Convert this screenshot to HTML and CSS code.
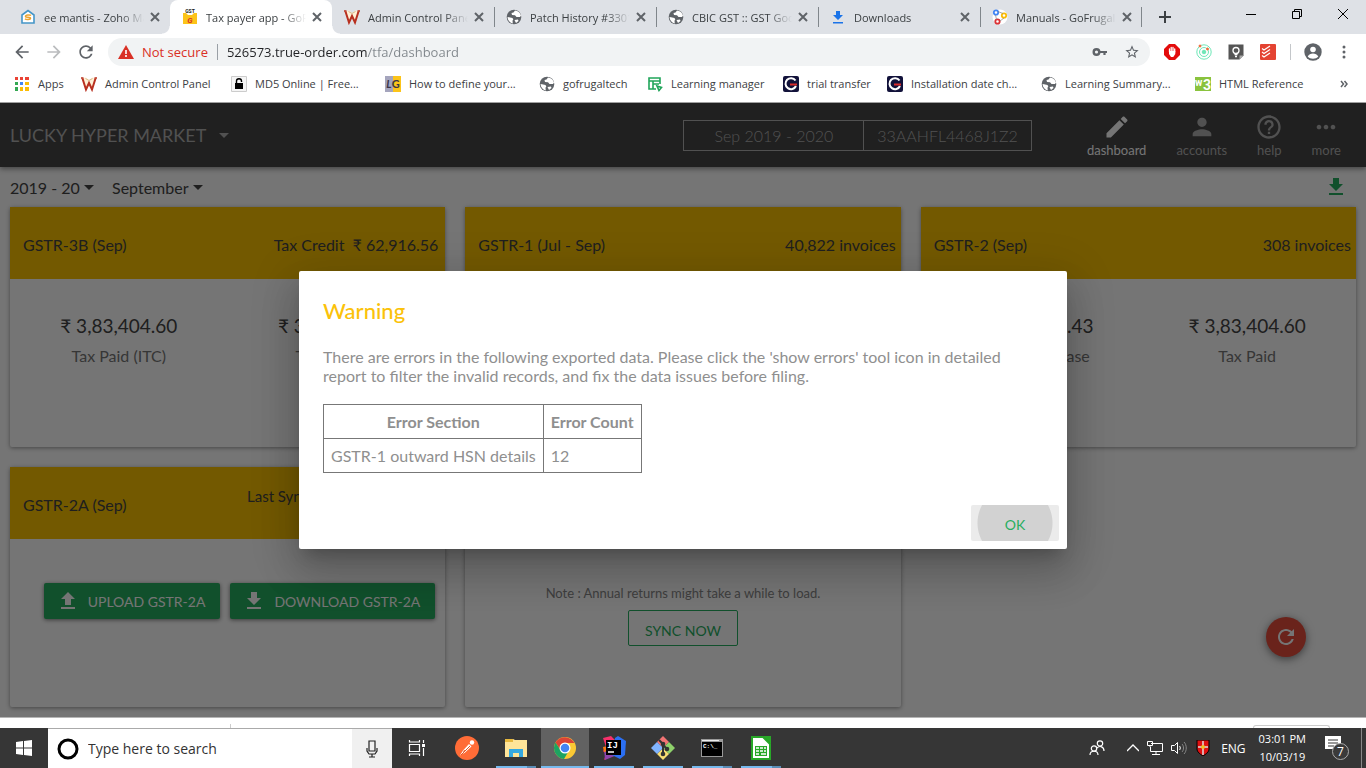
FILE: index.html
```html
<!DOCTYPE html>
<html lang="en">
<head>
    <meta charset="UTF-8">
    <meta name="viewport" content="width=device-width, initial-scale=1.0">
    <title>Tax payer app - GoFrugal</title>
    <link rel="stylesheet" href="styles.css">
</head>
<body>
    <!-- shared icons -->
    <svg class="sprite" aria-hidden="true">
        <symbol id="close" viewBox="0 0 10 10"><path d="M1 1l8 8M9 1L1 9" stroke="#5f6368" stroke-width="2"/></symbol>
        <symbol id="globe" viewBox="0 0 16 16"><circle cx="8" cy="8" r="7.3" fill="#5f6368"/><path d="M9 1.500l-1.500 2-2 .5.5 2 3 .3 1.500 1.700h3.500l1-1.500C14 3.500 12 1.800 9 1.500zM1.500 8l1.500.2 3.500.8.8 1.500-.8 1.200.3 2.800C4 13.800 1.800 11.500 1.500 8zM8.500 11l3.500-.5.5 1.500-2.500 2z" fill="#fff"/></symbol>
        <symbol id="book" viewBox="0 0 16 16"><path d="M1.500 2L5 13l3-6 3 6 3.500-11-3-.5L8 4 5 1.500z" fill="#fff0d6"/><path d="M0 2h2.500M13.500 2H16" stroke="#b8301f" stroke-width="1.500"/><path d="M1.500 2.500L5 13.500 8 7l3 6.500 3.500-11" fill="none" stroke="#b8301f" stroke-width="2"/><path d="M4.500 2.500L8 4.500l3.500-2" fill="none" stroke="#d9b98c"/></symbol>
        <symbol id="gee" viewBox="0 0 16 16"><rect width="16" height="16" rx="2" fill="#12123a"/><path d="M12.500 4.500A5.500 5.500 0 1 0 13 10" fill="none" stroke="#fff" stroke-width="2"/><path d="M7 8.500h7" stroke="#d92b2b" stroke-width="2"/></symbol>
        <symbol id="download" viewBox="0 0 24 24"><path d="M19 9h-4V3H9v6H5l7 7 7-7zM5 18v2h14v-2H5z"/></symbol>
        <symbol id="upload" viewBox="0 0 24 24"><path d="M9 16h6v-6h4l-7-7-7 7h4zm-4 2h14v2H5z"/></symbol>
        <symbol id="refresh" viewBox="0 0 24 24"><path d="M17.650 6.350C16.200 4.900 14.210 4 12 4c-4.420 0-7.990 3.580-7.990 8s3.570 8 7.990 8c3.730 0 6.840-2.550 7.730-6h-2.080c-.82 2.330-3.040 4-5.650 4-3.310 0-6-2.690-6-6s2.690-6 6-6c1.660 0 3.140.69 4.220 1.780L13 11h7V4l-2.350 2.350z"/></symbol>
        <symbol id="back" viewBox="0 0 24 24"><path d="M20 11H7.830l5.590-5.590L12 4l-8 8 8 8 1.410-1.410L7.830 13H20v-2z"/></symbol>
    </svg>

    <header class="browser">
        <div class="tabs">
            <div class="tab"><svg class="fav" viewBox="0 0 16 16"><path d="M2 6l6-4.500L14 6v8H2z" fill="#fff" stroke="#4596c8" stroke-width="1.600"/><path d="M11 6.500c-1-1-6-.5-5.500 1.200.3 1 5 .3 5 1.600 0 1.600-4.500 1.700-5.500.5" fill="none" stroke="#eda32c" stroke-width="1.500"/></svg><span class="tab-title">ee mantis - Zoho Mail</span><button aria-label="Close tab"><svg><use href="#close"/></svg></button></div>
            <div class="tab active"><svg class="fav" viewBox="0 0 16 16"><path d="M1 4h3l2 2h4l2-2h3v11H1z" fill="#fcc419"/><text x="8" y="4" text-anchor="middle" font-size="5" font-weight="bold" font-family="Roboto, sans-serif" fill="#222">GST</text><text x="8" y="14" text-anchor="middle" font-size="8" font-weight="bold" font-style="italic" font-family="Roboto, sans-serif" fill="#d93025">G</text></svg><span class="tab-title">Tax payer app - GoFrugal</span><button aria-label="Close tab"><svg><use href="#close"/></svg></button></div>
            <div class="tab"><svg class="fav"><use href="#book"/></svg><span class="tab-title">Admin Control Panel</span><button aria-label="Close tab"><svg><use href="#close"/></svg></button></div>
            <div class="tab line"><svg class="fav"><use href="#globe"/></svg><span class="tab-title">Patch History #3301</span><button aria-label="Close tab"><svg><use href="#close"/></svg></button></div>
            <div class="tab line"><svg class="fav"><use href="#globe"/></svg><span class="tab-title">CBIC GST :: GST Goods</span><button aria-label="Close tab"><svg><use href="#close"/></svg></button></div>
            <div class="tab line"><svg class="fav" viewBox="0 0 16 16" fill="#1a73e8"><path d="M6 2h4v4h3l-5 5-5-5h3zM3 13h10v1.500H3z"/></svg><span class="tab-title">Downloads</span><button aria-label="Close tab"><svg><use href="#close"/></svg></button></div>
            <div class="tab line last"><svg class="fav" viewBox="0 0 16 16"><circle cx="8" cy="8" r="7.500" fill="#fff"/><g fill="none" stroke-width="1.800"><circle cx="4" cy="3.500" r="2.200" stroke="#4285f4"/><circle cx="12" cy="6.500" r="2.200" stroke="#fbbc05"/><circle cx="5.500" cy="12.500" r="2.200" stroke="#db3236"/><path d="M6 2.500l5 2M3.500 6l1 4.500M8 12l4-3" stroke="#888" stroke-width=".7"/></g></svg><span class="tab-title">Manuals - GoFrugal</span><button aria-label="Close tab"><svg><use href="#close"/></svg></button></div>
            <button class="new-tab" aria-label="New tab"><svg viewBox="0 0 12 12"><path d="M6 0v12M0 6h12" stroke="#3c4043" stroke-width="2"/></svg></button>
            <div class="window-buttons">
                <button aria-label="Minimize"><svg viewBox="0 0 10 10"><path d="M0 5.500h10" stroke="#000"/></svg></button>
                <button aria-label="Restore"><svg viewBox="0 0 10 10" fill="none" stroke="#000"><path d="M.5 2.500h7v7h-7zM2.500 2.500v-2h7v7h-2"/></svg></button>
                <button aria-label="Close"><svg viewBox="0 0 10 10"><path d="M0 0l10 10M10 0L0 10" stroke="#000"/></svg></button>
            </div>
        </div>
        <div class="toolbar">
            <button class="tool" aria-label="Back"><svg fill="#5f6368"><use href="#back"/></svg></button>
            <button class="tool flip" aria-label="Forward"><svg fill="#babcbe"><use href="#back"/></svg></button>
            <button class="tool" aria-label="Reload"><svg fill="#5f6368"><use href="#refresh"/></svg></button>
            <div class="omnibox">
                <svg class="warn" viewBox="0 0 16 14"><path d="M8 0l8 14H0z" fill="#d93025"/><path d="M8 5v4M8 10v2" stroke="#fff" stroke-width="1.600"/></svg>
                <span class="not-secure">Not secure</span>
                <input class="url" type="text" aria-label="Address" value="526573.true-order.com/tfa/dashboard">
                <button aria-label="Saved passwords"><svg viewBox="0 0 16 16" fill="none" stroke="#5f6368"><circle cx="4.500" cy="8" r="2.800" stroke-width="2.400"/><path d="M7 8h8M12.500 8v3" stroke-width="2.200"/></svg></button>
                <button aria-label="Bookmark this page"><svg viewBox="0 0 24 24" fill="#5f6368"><path d="M22 9.240l-7.190-.62L12 2 9.190 8.630 2 9.240l5.460 4.730L5.820 21 12 17.270 18.180 21l-1.630-7.030L22 9.240zM12 15.400l-3.760 2.270 1-4.280-3.320-2.880 4.380-.38L12 6.100l1.710 4.040 4.380.38-3.320 2.880 1 4.280L12 15.400z"/></svg></button>
            </div>
            <div class="extensions">
                <button aria-label="Ad blocker"><svg viewBox="0 0 16 16"><path d="M5 0h6l5 5v6l-5 5H5l-5-5V5z" fill="#e30b0b"/><path d="M5.500 8V5M7.200 7V3.500M9 7V3.500M10.700 8V5" stroke="#fff" stroke-width="1.300" stroke-linecap="round"/><path d="M5 7h6.300v3l-2 3H7l-2-3z" fill="#fff"/></svg></button>
                <button aria-label="Orbit"><svg viewBox="0 0 16 16" fill="none" stroke="#6ee7b7"><circle cx="8" cy="8" r="7.200"/><circle cx="8" cy="8" r="4.500"/><circle cx="8" cy="8" r="1.800" fill="#6ee7b7"/><circle cx="4" cy="2" r="1" fill="#f26b3a" stroke="#f26b3a"/><circle cx="11.500" cy="5" r="1" fill="#f26b3a" stroke="#f26b3a"/></svg></button>
                <button aria-label="Keep"><svg viewBox="0 0 16 16"><path d="M.5.5h15v11l-4 4H.5z" fill="#555"/><path d="M11.500 15.500v-4h4z" fill="#aaa"/><circle cx="8" cy="6.500" r="3" fill="none" stroke="#fff" stroke-width="1.300"/><path d="M6.500 10.500h3M7 12.500h2" stroke="#fff" stroke-width="1.300"/></svg></button>
                <button aria-label="Todoist"><svg viewBox="0 0 16 16"><rect width="16" height="16" rx="1" fill="#e44332"/><path d="M2 4.500l2 1.500 6-4M2 8l2 1.500 6-4M2 11.500L4 13l6-4" fill="none" stroke="#fff" stroke-width="1.200"/></svg></button>
            </div>
            <button class="profile" aria-label="Profile"><svg viewBox="0 0 18 18"><circle cx="9" cy="9" r="8.700" fill="#5f6368"/><circle cx="9" cy="6.500" r="2.800" fill="#fff"/><path d="M3.700 13.500c2-4 8.600-4 10.600 0-2.500 3-8.100 3-10.600 0z" fill="#fff"/></svg></button>
            <button class="menu" aria-label="Menu"><svg viewBox="0 0 4 16" fill="#5f6368"><circle cx="2" cy="3" r="1.500"/><circle cx="2" cy="8" r="1.500"/><circle cx="2" cy="13" r="1.500"/></svg></button>
        </div>
        <nav class="bookmarks">
            <a href="#"><svg viewBox="0 0 16 16"><path d="M1 1h4v4H1zM6 1h4v4H6zM11 1h4v4h-4z" fill="#ea4335"/><path d="M1 6h4v4H1z" fill="#34a853"/><path d="M6 6h4v4H6z" fill="#4285f4"/><path d="M11 6h4v4h-4zM11 11h4v4h-4zM6 11h4v4H6z" fill="#fbbc05"/><path d="M1 11h4v4H1z" fill="#34a853"/><path d="M4.500 0v16M9.500 0v16M0 4.500h16M0 9.500h16" stroke="#fff"/></svg>Apps</a>
            <a href="#"><svg><use href="#book"/></svg>Admin Control Panel</a>
            <a href="#"><svg viewBox="0 0 16 16"><path d="M.5.5h15v15H.5z" fill="#f5f5f5" stroke="#ccc"/><path d="M4 7h8v6H4z"/><path d="M5.500 7V5c0-3 5-3 5 0v1" fill="none" stroke="#000" stroke-width="1.400"/></svg>MD5 Online | Free...</a>
            <a href="#"><svg viewBox="0 0 16 16"><path d="M0 0h8v16H0z" fill="#a5a5bd"/><path d="M8 0h8v16H8z" fill="#fcc419"/><text x="8" y="12" text-anchor="middle" font-size="11" font-weight="bold" font-family="Lato, sans-serif" fill="#3c3548"><tspan font-style="italic">L</tspan>G</text></svg>How to define your...</a>
            <a href="#"><svg><use href="#globe"/></svg>gofrugaltech</a>
            <a href="#"><svg viewBox="0 0 16 16" fill="none" stroke="#20a55a" stroke-width="1.600"><path d="M9 13H2V2h11v6M2 5h11M6 5v8M6 8h6"/><path d="M10 10l4.500 1.500-2.500 3z"/></svg>Learning manager</a>
            <a href="#"><svg><use href="#gee"/></svg>trial transfer</a>
            <a href="#"><svg><use href="#gee"/></svg>Installation date ch...</a>
            <a href="#"><svg><use href="#globe"/></svg>Learning Summary...</a>
            <a href="#"><svg viewBox="0 0 16 16"><rect y="1" width="16" height="14" fill="#8ac33e"/><text x="0" y="10" font-size="10" font-weight="bold" font-family="Roboto, sans-serif" fill="#fff">w</text><text x="8" y="14" font-size="14" font-weight="bold" font-family="Roboto, sans-serif" fill="#fff">3</text></svg>HTML Reference</a>
            <button class="more-bookmarks" aria-label="More bookmarks"><svg viewBox="0 0 8 8" fill="none" stroke="#5f6368" stroke-width="1.500"><path d="M1 1l2.500 3L1 7M4.500 1L7 4 4.500 7"/></svg></button>
        </nav>
    </header>

    <main class="app">
        <header class="app-header">
            <div class="select company">
                <select aria-label="Company"><option>LUCKY HYPER MARKET</option></select>
            </div>
            <div class="period"><span>Sep 2019 - 2020</span><span>33AAHFL4468J1Z2</span></div>
            <nav class="app-nav">
                <a class="current" href="#"><svg viewBox="0 0 24 24"><path d="M3 17.250V21h3.750L17.810 9.940l-3.750-3.750L3 17.250zM20.710 7.040c.39-.39.39-1.020 0-1.410l-2.340-2.340c-.39-.39-1.020-.39-1.410 0l-1.830 1.830 3.750 3.750 1.830-1.830z"/></svg>dashboard</a>
                <a href="#"><svg viewBox="0 0 24 24"><path d="M12 12c2.210 0 4-1.790 4-4s-1.790-4-4-4-4 1.790-4 4 1.790 4 4 4zm0 2c-2.670 0-8 1.340-8 4v2h16v-2c0-2.660-5.330-4-8-4z"/></svg>accounts</a>
                <a href="#"><svg viewBox="0 0 24 24"><path d="M11 18h2v-2h-2v2zm1-16C6.480 2 2 6.480 2 12s4.480 10 10 10 10-4.480 10-10S17.520 2 12 2zm0 18c-4.410 0-8-3.590-8-8s3.590-8 8-8 8 3.590 8 8-3.590 8-8 8zm0-14c-2.210 0-4 1.790-4 4h2c0-1.100.9-2 2-2s2 .9 2 2c0 2-3 1.750-3 5h2c0-2.250 3-2.500 3-5 0-2.210-1.790-4-4-4z"/></svg>help</a>
                <a href="#"><svg viewBox="0 0 24 24"><path d="M6 10c-1.100 0-2 .9-2 2s.9 2 2 2 2-.9 2-2-.9-2-2-2zm12 0c-1.100 0-2 .9-2 2s.9 2 2 2 2-.9 2-2-.9-2-2-2zm-6 0c-1.100 0-2 .9-2 2s.9 2 2 2 2-.9 2-2-.9-2-2-2z"/></svg>more</a>
            </nav>
        </header>

        <div class="filters">
            <div class="select"><select aria-label="Year"><option>2019 - 20</option></select></div>
            <div class="select"><select aria-label="Month"><option>September</option></select></div>
            <button class="export" aria-label="Download"><svg><use href="#download"/></svg></button>
        </div>

        <div class="cards">
            <section class="card">
                <div class="card-header credit"><h2>GSTR-3B (Sep)</h2><span>Tax Credit &nbsp;₹ 62,916.56</span></div>
                <div class="amounts">
                    <div><b>₹ 3,83,404.60</b><span>Tax Paid (ITC)</span></div>
                    <div><b>₹ 3,20,488.04</b><span>Tax Payable</span></div>
                </div>
            </section>
            <section class="card">
                <div class="card-header"><h2>GSTR-1 (Jul - Sep)</h2><span>40,822 invoices</span></div>
            </section>
            <section class="card">
                <div class="card-header"><h2>GSTR-2 (Sep)</h2><span>308 invoices</span></div>
                <div class="amounts">
                    <div><b>₹ 50,97,563.43</b><span>Taxable Purchase</span></div>
                    <div><b>₹ 3,83,404.60</b><span>Tax Paid</span></div>
                </div>
            </section>
            <section class="card">
                <div class="card-header sync"><h2>GSTR-2A (Sep)</h2><span>Last Sync : 03 Oct 2019 2:48</span></div>
                <div class="actions">
                    <button><svg><use href="#upload"/></svg>UPLOAD GSTR-2A</button>
                    <button><svg><use href="#download"/></svg>DOWNLOAD GSTR-2A</button>
                </div>
            </section>
            <section class="card">
                <div class="card-header"><h2>GSTR-9</h2></div>
                <div class="annual">
                    <p>Note : Annual returns might take a while to load.</p>
                    <button>SYNC NOW</button>
                </div>
            </section>
        </div>

        <button class="fab" aria-label="Refresh"><svg><use href="#refresh"/></svg></button>

        <div class="overlay">
            <div class="dialog" role="dialog" aria-labelledby="dialog-title">
                <h2 id="dialog-title">Warning</h2>
                <p>There are errors in the following exported data. Please click the 'show errors' tool icon in detailed report to filter the invalid records, and fix the data issues before filing.</p>
                <table>
                    <tr><th>Error Section</th><th>Error Count</th></tr>
                    <tr><td>GSTR-1 outward HSN details</td><td>12</td></tr>
                </table>
                <button class="ok">OK</button>
            </div>
        </div>
    </main>

    <div class="shelf"><span class="shelf-item"></span><span class="shelf-all"></span></div>

    <footer class="taskbar">
        <button class="start" aria-label="Start"><svg viewBox="0 0 16 16" fill="#fff"><path d="M0 2l7-1v6.500H0zM8 .9L16 0v7.500H8zM0 8.500h7V15l-7-1zM8 8.500h8V16l-8-1z"/></svg></button>
        <label class="search">
            <svg viewBox="0 0 22 22"><circle cx="11" cy="11" r="9" fill="none" stroke="#000" stroke-width="3"/></svg>
            <input type="text" placeholder="Type here to search">
        </label>
        <button class="mic" aria-label="Voice search"><svg viewBox="0 0 16 18" fill="none" stroke="#222" stroke-width="1.200"><path d="M5 1h6v10H5zM3 8v3l2 3h6l2-3V8M8 14v3M5 17h6"/></svg></button>
        <div class="task-apps">
            <button class="view" aria-label="Task view"><svg viewBox="0 0 18 18" fill="none" stroke="#fff" stroke-width="1.200"><path d="M1.500 5.500h10v7h-10zM1.500 1v2h10V1M1.500 17v-2h10v2M15.500 1v3M15.500 9v8"/><path d="M14 5h3v3h-3z" fill="#fff" stroke="none"/></svg></button>
            <button aria-label="Postman"><svg viewBox="0 0 24 24"><circle cx="12" cy="12" r="12" fill="#ff6c37"/><path d="M5 19.500l3-5L14 8l2.500 2.500-6.500 6z" fill="#fff"/><path d="M6 19l9-9M8.500 16.500l1-2.500" stroke="#e25a2a"/><circle cx="17" cy="6.500" r="2.200" fill="#fff"/></svg></button>
            <button class="open" aria-label="File Explorer"><svg viewBox="0 0 24 24"><path d="M1 3h8l2 1h12v17H1z" fill="#ffe599"/><path d="M1 3h8v3H1z" fill="#e8b93e"/><path d="M5 13h14v8h-4v-4H9v4H5z" fill="#35a9e0"/></svg></button>
            <button class="focused" aria-label="Chrome"><svg viewBox="0 0 24 24"><circle cx="12" cy="12" r="11" fill="#fbc934"/><path d="M2.500 6.500A11 11 0 0 1 21.500 7H12l-4.500 7z" fill="#db4437"/><path d="M2.500 6.500A11 11 0 0 0 11 23l5-8.500-8.500-.5z" fill="#1da362"/><circle cx="12" cy="12" r="5.500" fill="#fff"/><circle cx="12" cy="12" r="4.300" fill="#4285f4"/></svg></button>
            <button class="open one" aria-label="IntelliJ IDEA"><svg viewBox="0 0 24 24"><path d="M1 2l8-2 6 6-5 14-8 4 2-6-3-3 3-4z" fill="#f8306b"/><path d="M2 12l8-2 5 9-12 5z" fill="#8e44ad"/><path d="M1 11l5-1v5l-4 1z" fill="#f97a12"/><path d="M13 2l3-2 8 5-1 14-5 4-8-4z" fill="#2b6ff2"/><path d="M4 4h15v15H4z" fill="#000"/><path d="M6 16h6" stroke="#fff" stroke-width="1.500"/><text x="5" y="12" font-size="9" font-weight="bold" font-family="Liberation Mono, monospace" fill="#fff">IJ</text></svg></button>
            <button class="open one" aria-label="Git"><svg viewBox="0 0 24 24"><path d="M12 0l6 6-6 6-6-6z" fill="#f27474"/><path d="M18 6l6 6-6 6-6-6z" fill="#8ed16b"/><path d="M12 12l6 6-6 6-6-6z" fill="#f8dd72"/><path d="M6 6l6 6-6 6-6-6z" fill="#80b4ff"/><path d="M8 4l4 4v10M12 9l4 4" stroke="#333" stroke-width="2" fill="none"/><g fill="#333"><circle cx="12" cy="8" r="2.300"/><circle cx="12" cy="18" r="2.300"/><circle cx="16" cy="13" r="2.300"/></g></svg></button>
            <button class="open" aria-label="Command Prompt"><svg viewBox="0 0 24 24"><path d="M1 3h22v18H1z" fill="#999"/><path d="M2 6h20v14H2z"/><path d="M2 4h17v1H2z" fill="#eee"/><text x="3" y="12" font-size="6" font-weight="bold" font-family="Liberation Mono, monospace" fill="#fff">C:\_</text></svg></button>
            <button class="open" aria-label="LibreOffice Calc"><svg viewBox="0 0 24 24"><path d="M3 1h11l7 7v15H3z" fill="#fff" stroke="#28a828" stroke-width="2"/><path d="M14 0h8v8z" fill="#28a828"/><path d="M6 10h12v10H6z" fill="#28a828"/><path d="M7 12h3M11 12h3M15 12h2M7 15h3M11 15h3M15 15h2M7 18h3M12 18h5" stroke="#fff" stroke-width="1.500"/></svg></button>
        </div>
        <div class="tray">
            <svg class="people" viewBox="0 0 16 16" fill="none" stroke="#fff" stroke-width="1.200"><circle cx="11" cy="3.500" r="2.700"/><path d="M8 8c3-3 7-1 7 3"/><circle cx="5" cy="8.500" r="2.700"/><path d="M1 15c0-5 8-5 8 0"/></svg>
            <svg class="chevron" viewBox="0 0 12 12" fill="none" stroke="#fff" stroke-width="1.300"><path d="M0 9l6-6 6 6"/></svg>
            <svg viewBox="0 0 16 16" fill="none" stroke="#fff"><path d="M4 3.500h11.500v8H3.500V7M9 12v3M5 14.500h8M.5 1.500h5v4h-5zM3 5v2"/></svg>
            <svg viewBox="0 0 16 16" fill="none" stroke="#fff"><path d="M.5 5.500h3l3-3v11l-3-3h-3z"/><path d="M8.500 6c1 1 1 3 0 4"/><path d="M11 4c2 2 2 6 0 8M13 2c3 3 3 9 0 12" stroke="#888"/></svg>
            <svg viewBox="0 0 16 16"><path d="M2 0h12v9c0 3-3 5-6 7-3-2-6-4-6-7z" fill="#e01010" stroke="#000"/><path d="M8 1v14M3 7h10" stroke="#ddd" stroke-width="1.500"/><circle cx="8" cy="7" r="2" fill="#f0c020"/></svg>
            <span class="lang">ENG</span>
            <time>03:01 PM<br>10/03/19</time>
            <button class="notices" aria-label="7 notifications"><svg viewBox="0 0 24 24"><path d="M0 0h16v13h-5l-3 3v-3H0z" fill="#fff"/><path d="M3 4h10M3 7h10M3 10h6" stroke="#333"/><circle cx="15.500" cy="15.500" r="8" fill="#3a3a3a" stroke="#aaa"/><text x="15.500" y="20" text-anchor="middle" font-size="12" font-family="Open Sans, sans-serif" fill="#fff">7</text></svg></button>
        </div>
    </footer>
</body>
</html>
```
FILE: styles.css
```css
* {
    margin: 0;
    padding: 0;
    box-sizing: border-box;
}

body {
    display: flex;
    flex-direction: column;
    min-height: 100vh;
    font-family: Lato, sans-serif;
    background-color: #fff;
}

button {
    border: none;
    background: none;
    font-family: inherit;
    cursor: pointer;
}

a {
    color: inherit;
    text-decoration: none;
}

svg {
    display: block;
    flex: none;
}

.sprite {
    position: absolute;
    width: 0;
    height: 0;
}

/* browser */
.browser {
    font-family: "Open Sans", sans-serif;
    font-size: 11px;
    color: #3c4043;
    border-bottom: 1px solid #a0a0a0;
}

.tabs {
    display: flex;
    height: 34px;
    padding-left: 8px;
    background-color: #dee1e6;
}

.tab {
    position: relative;
    display: flex;
    align-items: center;
    width: 162px;
    padding: 0 10px 0 12px;
}

.tab.active {
    background-color: #fff;
    border-radius: 8px 8px 0 0;
}

/* curved feet of the active tab */
.tab.active::before,
.tab.active::after {
    content: "";
    position: absolute;
    bottom: 0;
    width: 8px;
    height: 8px;
}

.tab.active::before {
    left: -8px;
    background: radial-gradient(circle at 0 0, transparent 7px, #fff 8px);
}

.tab.active::after {
    right: -8px;
    background: radial-gradient(circle at 100% 0, transparent 7px, #fff 8px);
}

.tab.line::before,
.tab.last::after {
    content: "";
    position: absolute;
    left: 0;
    top: 7px;
    width: 1px;
    height: 20px;
    background-color: #80868b;
}

.tab.last::after {
    left: auto;
    right: 0;
}

.fav {
    width: 16px;
    height: 16px;
    margin-right: 8px;
}

.tab-title {
    flex: 1;
    overflow: hidden;
    white-space: nowrap;
    -webkit-mask-image: linear-gradient(to left, transparent, #000 24px);
    mask-image: linear-gradient(to left, transparent, #000 24px);
}

.tab button {
    margin-left: 6px;
}

.tab button svg {
    width: 10px;
    height: 10px;
}

.new-tab {
    padding: 0 17px;
}

.new-tab svg {
    width: 12px;
    height: 12px;
}

.window-buttons {
    display: flex;
    margin-left: auto;
}

.window-buttons button {
    width: 46px;
    padding: 0 18px 6px;
}

.window-buttons svg {
    width: 10px;
    height: 10px;
}

.toolbar {
    display: flex;
    align-items: center;
    height: 35px;
    padding: 0 20px 0 12px;
}

.tool {
    margin-right: 12px;
}

.tool svg {
    width: 20px;
    height: 20px;
}

.tool.flip {
    transform: scaleX(-1);
}

.omnibox {
    flex: 1;
    display: flex;
    align-items: center;
    height: 28px;
    padding: 0 10px;
    border-radius: 14px;
    background-color: #f1f3f4;
    font-size: 13px;
}

.warn {
    width: 16px;
    height: 14px;
    margin-right: 8px;
}

.not-secure {
    padding-right: 9px;
    border-right: 1px solid #9aa0a6;
    line-height: 16px;
    color: #d93025;
}

/* host in dark, path in grey */
.url {
    flex: 1;
    min-width: 0;
    padding-left: 9px;
    border: none;
    outline: none;
    font: inherit;
    color: transparent;
    background-image: linear-gradient(to right, #202124 149px, #80868b 149px);
    -webkit-background-clip: text;
    background-clip: text;
}

.omnibox button {
    margin-left: 16px;
}

.omnibox button svg {
    width: 16px;
    height: 16px;
}

.extensions {
    display: flex;
    gap: 16px;
    margin-left: 14px;
    padding-right: 14px;
    border-right: 1px solid #c4c7ca;
}

.extensions svg {
    width: 16px;
    height: 16px;
}

.profile {
    margin-left: 13px;
}

.profile svg {
    width: 18px;
    height: 18px;
}

.menu {
    margin-left: 20px;
}

.menu svg {
    width: 4px;
    height: 16px;
}

.bookmarks {
    display: grid;
    grid-template-columns: 67px 150px 154px 154px 108px 136px 104px 154px 154px 1fr auto;
    align-items: center;
    height: 33px;
    padding: 0 18px 4px 14px;
    overflow: hidden;
}

.bookmarks a {
    display: flex;
    align-items: center;
    gap: 8px;
    white-space: nowrap;
}

.bookmarks svg {
    width: 16px;
    height: 16px;
}

.bookmarks .more-bookmarks svg {
    width: 8px;
    height: 8px;
}

/* application */
.app {
    position: relative;
    flex: 1;
    background-color: #fefefe;
    color: #444;
    overflow: hidden;
}

.app-header {
    display: flex;
    align-items: center;
    height: 64px;
    padding: 0 25px 0 10px;
    background-color: #464646;
    box-shadow: 0 2px 5px rgba(0, 0, 0, .4);
    color: #b0b0b0;
}

.select {
    display: flex;
    align-items: center;
    gap: 4px;
}

.select::after {
    content: "";
    border: 5px solid transparent;
    border-top-color: currentColor;
    border-bottom: 0;
}

.select select {
    appearance: none;
    border: none;
    background: none;
    color: inherit;
    font-family: inherit;
    font-size: 16px;
}

.company {
    gap: 12px;
}

.company select {
    font-size: 18px;
}

.period {
    display: flex;
    margin-left: auto;
    border: 1px solid #b0b0b0;
    font-size: 16px;
    font-weight: 300;
    line-height: 29px;
    text-align: center;
}

.period span {
    padding: 0 13px;
}

.period span:first-child {
    padding: 0 30px;
    border-right: 1px solid #b0b0b0;
}

.app-nav {
    display: flex;
    gap: 30px;
    margin-left: 55px;
    font-size: 13px;
}

.app-nav a {
    display: flex;
    flex-direction: column;
    align-items: center;
    line-height: 16px;
}

.app-nav svg {
    width: 28px;
    height: 28px;
    margin: 0 -2px 1px;
    fill: currentColor;
}

.app-nav .current {
    color: #fff;
}

.filters {
    display: flex;
    align-items: center;
    gap: 18px;
    height: 40px;
    padding: 0 18px 0 10px;
}

.export {
    margin-left: auto;
}

.export svg {
    width: 24px;
    height: 24px;
    fill: #27ae60;
}

.cards {
    display: grid;
    grid-template-columns: repeat(3, 1fr);
    grid-auto-rows: 240px;
    gap: 20px;
    padding: 0 10px 10px;
}

.card {
    border-radius: 2px;
    background-color: #fff;
    box-shadow: 0 1px 4px rgba(0, 0, 0, .4);
}

.card-header {
    display: flex;
    align-items: center;
    justify-content: space-between;
    height: 72px;
    padding: 2px 5px 0 13px;
    background-color: #fac200;
    font-size: 16px;
}

.card-header h2 {
    font-size: inherit;
    font-weight: normal;
}

.card-header.credit,
.card-header.sync {
    padding-right: 7px;
}

.sync span {
    margin-bottom: 16px;
    font-size: 15px;
}

.amounts {
    display: grid;
    grid-template-columns: 1fr 1fr;
    padding-top: 35px;
    text-align: center;
}

.amounts b {
    display: block;
    font-size: 19px;
    font-weight: normal;
    line-height: 24px;
}

.amounts span {
    display: block;
    margin-top: 8px;
    font-size: 16px;
    line-height: 20px;
    color: #777;
}

.actions {
    display: flex;
    justify-content: flex-end;
    gap: 10px;
    padding: 44px 10px;
}

.actions button {
    display: flex;
    align-items: center;
    gap: 8px;
    height: 36px;
    padding: 0 15px 0 12px;
    border-radius: 2px;
    background-color: #27ae60;
    box-shadow: 0 1px 4px rgba(0, 0, 0, .5);
    color: #fff;
    font-size: 14px;
}

.actions svg {
    width: 24px;
    height: 24px;
    fill: #fff;
}

.annual {
    padding-top: 46px;
    text-align: center;
}

.annual p {
    margin-bottom: 9px;
    font-size: 13px;
    line-height: 16px;
    color: #888;
}

.annual button {
    height: 36px;
    padding: 5px 16px 0;
    border: 1px solid #27ae60;
    border-radius: 2px;
    color: #27ae60;
    font-size: 14px;
}

.fab {
    position: absolute;
    right: 60px;
    bottom: 60px;
    width: 40px;
    height: 40px;
    border-radius: 50%;
    background-color: #e74c3c;
    box-shadow: 0 2px 8px rgba(0, 0, 0, .5);
}

.fab svg {
    width: 24px;
    height: 24px;
    margin: 0 auto;
    fill: #fff;
}

/* warning dialog */
.overlay {
    position: absolute;
    inset: 0;
    display: flex;
    align-items: center;
    justify-content: center;
    background-color: rgba(0, 0, 0, .54);
}

.dialog {
    width: 768px;
    max-width: 90%;
    padding: 24px 8px 8px 24px;
    border-radius: 2px;
    background-color: #fff;
    box-shadow: 0 11px 15px -7px rgba(0, 0, 0, .2), 0 24px 38px 3px rgba(0, 0, 0, .14), 0 9px 46px 8px rgba(0, 0, 0, .12);
    color: #8f8f8f;
    font-size: 16px;
}

.dialog h2 {
    margin-bottom: 21px;
    font-size: 22px;
    font-weight: 500;
    line-height: 31px;
    color: #fbc20a;
}

.dialog p {
    margin: 0 16px 19px 0;
    line-height: 19px;
}

.dialog table {
    border-collapse: collapse;
}

.dialog th,
.dialog td {
    padding: 7px;
    border: 1px solid #777;
    line-height: 19px;
    text-align: left;
}

.dialog th {
    text-align: center;
}

.ok {
    display: block;
    width: 88px;
    height: 36px;
    margin: 32px 0 0 auto;
    padding-top: 3px;
    border-radius: 2px;
    background: radial-gradient(circle, #d2d2d2 37px, #ebebeb 38px);
    color: #27ae60;
    font-size: 14px;
}

/* downloads bar */
.shelf {
    display: flex;
    justify-content: space-between;
    align-items: flex-end;
    height: 11px;
    padding: 0 36px 0 0;
    border-top: 1px solid #b5b5b5;
    overflow: hidden;
}

.shelf-item {
    width: 231px;
    height: 4px;
    border-right: 1px solid #ccc;
}

.shelf-all {
    width: 77px;
    height: 3px;
    border: 1px solid #ccc;
    border-bottom: 0;
    border-radius: 3px 3px 0 0;
}

/* taskbar */
.taskbar {
    display: flex;
    height: 40px;
    background-color: #363636;
    color: #fff;
    font-family: "Open Sans", sans-serif;
    font-size: 12px;
}

.start {
    width: 48px;
    padding: 0 16px;
}

.start svg {
    width: 16px;
    height: 16px;
}

.search {
    display: flex;
    align-items: center;
    gap: 9px;
    width: 304px;
    padding-left: 9px;
    border-top: 1px solid #aaa;
    background-color: #fff;
}

.search svg {
    width: 22px;
    height: 22px;
}

.search input {
    flex: 1;
    min-width: 0;
    border: none;
    outline: none;
    font-family: inherit;
    font-size: 14px;
}

.search input::placeholder {
    color: #333;
}

.mic {
    width: 40px;
    padding: 0 12px;
    border-top: 1px solid #aaa;
    background-color: #f0f0f0;
}

.mic svg {
    width: 16px;
    height: 18px;
}

.task-apps {
    display: flex;
    gap: 1px;
}

.task-apps button {
    position: relative;
    width: 48px;
    padding: 0 12px;
}

.task-apps svg {
    width: 24px;
    height: 24px;
}

.task-apps .view {
    width: 50px;
    padding: 0 16px;
}

.task-apps .view svg {
    width: 18px;
    height: 18px;
}

.task-apps .focused {
    background-color: #626262;
}

.task-apps .open::after,
.task-apps .focused::after {
    content: "";
    position: absolute;
    left: 4px;
    right: 4px;
    bottom: 0;
    height: 2px;
    background: linear-gradient(to right, #76b9ed 31px, #5a8cb5 31px);
}

.task-apps .one::after {
    background: #76b9ed;
}

.task-apps .focused::after {
    left: 0;
    right: 0;
    background: #76b9ed;
}

.tray {
    display: flex;
    align-items: center;
    gap: 8px;
    margin-left: auto;
    margin-right: 4px;
    padding-right: 12px;
    border-right: 1px solid #888;
}

.tray svg {
    width: 16px;
    height: 16px;
}

.tray .people {
    margin-right: 14px;
}

.tray .chevron {
    width: 12px;
    height: 12px;
}

.lang {
    margin: 0 5px 0 2px;
}

.tray time {
    font-size: 11px;
    line-height: 18px;
    text-align: center;
}

.notices {
    margin-left: 11px;
}

.tray .notices svg {
    width: 24px;
    height: 24px;
}
```
